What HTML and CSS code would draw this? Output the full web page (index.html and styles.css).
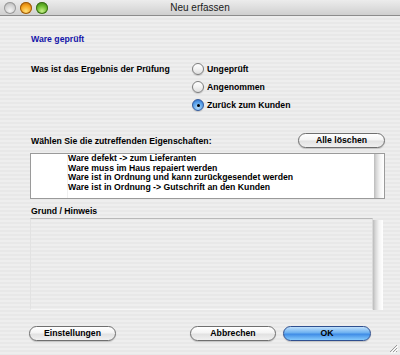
FILE: index.html
```html
<!DOCTYPE html>
<html>
<head>
<meta charset="utf-8">
<link rel="stylesheet" href="styles.css">
</head>
<body>
<div class="window">
  <div class="titlebar">
    <div class="lights">
      <span class="light gray"></span>
      <span class="light orange"></span>
      <span class="light green"></span>
    </div>
    <div class="title">Neu erfassen</div>
  </div>
  <div class="content">
    <div class="section-title">Ware geprüft</div>
    <div class="question">
      <div class="q-label">Was ist das Ergebnis der Prüfung</div>
      <div class="radios">
        <div class="radio-row"><span class="radio"></span>Ungeprüft</div>
        <div class="radio-row"><span class="radio"></span>Angenommen</div>
        <div class="radio-row"><span class="radio checked"></span>Zurück zum Kunden</div>
      </div>
    </div>
    <div class="props-header">
      <div class="label">Wählen Sie die zutreffenden Eigenschaften:</div>
      <button class="btn btn-clear">Alle löschen</button>
    </div>
    <div class="list">
      <div class="list-body">
        <div class="col-check"></div>
        <div class="col-text">
          <div class="item">Ware defekt -&gt; zum Lieferanten</div>
          <div class="item">Ware muss im Haus repaiert werden</div>
          <div class="item">Ware ist in Ordnung und kann zurückgesendet werden</div>
          <div class="item">Ware ist in Ordnung -&gt; Gutschrift an den Kunden</div>
        </div>
      </div>
      <div class="scroll"></div>
    </div>
    <div class="label grund">Grund / Hinweis</div>
    <div class="notes-row">
      <div class="notes"></div>
      <div class="scroll notes-scroll"></div>
    </div>
    <div class="footer">
      <button class="btn btn-settings">Einstellungen</button>
      <div class="spacer"></div>
      <button class="btn btn-cancel">Abbrechen</button>
      <button class="btn btn-ok">OK</button>
    </div>
  </div>
  <div class="grip">
    <svg width="10" height="10" viewBox="0 0 10 10">
      <path d="M9 2 L2 9 M9 5 L5 9 M9 8 L8 9" stroke="#9a9a9a" stroke-width="1" fill="none"/>
      <path d="M10 3 L3 10 M10 6 L6 10" stroke="#ffffff" stroke-width="1" fill="none"/>
    </svg>
  </div>
</div>
</body>
</html>
```
FILE: styles.css
```css
* { box-sizing: border-box; }
html, body { margin: 0; padding: 0; }
body { width: 400px; height: 355px; overflow: hidden; font-family: "Liberation Sans", Arial, sans-serif; }

.window {
  position: relative;
  width: 400px;
  height: 355px;
  background: repeating-linear-gradient(180deg, #eeeeee 0px, #eeeeee 2px, #e8e8e8 2px, #e8e8e8 4px);
  overflow: hidden;
}

.titlebar {
  position: relative;
  height: 16px;
  background: linear-gradient(180deg, #ececec 0%, #dedede 50%, #cfcfcf 100%);
  border-bottom: 1px solid #8c8c8c;
  display: flex;
  align-items: center;
  justify-content: center;
}
.lights {
  position: absolute;
  left: 4px;
  top: 2px;
  display: flex;
  gap: 4px;
}
.light {
  width: 12px;
  height: 12px;
  border-radius: 50%;
  display: block;
}
.light.gray {
  background: radial-gradient(circle at 50% 70%, #f4f4f4 0%, #cfcfcf 55%, #9d9d9d 100%);
  box-shadow: inset 0 0 0 1px #9a9a9a;
}
.light.orange {
  background: radial-gradient(circle at 50% 75%, #ffe07a 0%, #f5a21c 50%, #b15a00 100%);
  box-shadow: inset 0 0 0 1px #9b5b10;
}
.light.green {
  background: radial-gradient(circle at 50% 75%, #c8f08a 0%, #68b92a 50%, #2d6e0c 100%);
  box-shadow: inset 0 0 0 1px #3d6e1a;
}
.title {
  font-size: 10px;
  color: #1a1a1a;
  line-height: 15px;
}

.content {
  padding: 0 15px 0 30px;
  font-size: 8.7px;
  font-weight: bold;
  color: #000;
}

.section-title {
  margin-top: 18px;
  line-height: 11px;
  height: 11px;
  color: #1414a8;
  padding-left: 1px;
}

.question {
  margin-top: 15px;
  display: flex;
}
.q-label {
  width: 162px;
  line-height: 18px;
  padding-left: 1px;
}
.radios {
  display: flex;
  flex-direction: column;
}
.radio-row {
  height: 18px;
  line-height: 18px;
  display: flex;
  align-items: center;
}
.radio {
  width: 12px;
  height: 12px;
  border-radius: 50%;
  border: 1px solid #7d7d7d;
  background: linear-gradient(180deg, #ffffff 0%, #f2f2f2 50%, #dedede 100%);
  margin-right: 3px;
  display: flex;
  align-items: center;
  justify-content: center;
  box-shadow: 0 1px 1px rgba(0,0,0,0.15);
}
.radio.checked {
  border-color: #335a9c;
  background: radial-gradient(circle at 50% 75%, #b7dcfb 0%, #5aa2ea 55%, #2866c4 100%);
}
.radio.checked::after {
  content: "";
  width: 3px;
  height: 3px;
  border-radius: 50%;
  background: #000;
}

.props-header {
  margin-top: 19px;
  display: flex;
  justify-content: space-between;
  align-items: center;
  height: 15px;
}
.label { padding-left: 1px; }

.btn {
  font-family: "Liberation Sans", Arial, sans-serif;
  font-size: 8.7px;
  font-weight: bold;
  color: #000;
  height: 15px;
  padding: 0;
  border: 1px solid #6f6f6f;
  border-radius: 8px;
  background: linear-gradient(180deg, #ffffff 0%, #f4f4f4 45%, #e2e2e2 55%, #f0f0f0 100%);
  box-shadow: 0 1px 1px rgba(0,0,0,0.18);
  line-height: 13px;
}
.btn-clear { width: 87px; }

.list {
  margin-top: 5px;
  height: 46px;
  border: 1px solid #9a9a9a;
  background: #fff;
  display: flex;
}
.list-body {
  flex: 1;
  display: flex;
}
.col-check {
  width: 37px;
  border-right: 1px solid #f0f0f0;
}
.item {
  line-height: 9.5px;
  height: 9.5px;
  white-space: nowrap;
}
.scroll {
  width: 10px;
  background: linear-gradient(90deg, #bcbcbc 0%, #d8d8d8 25%, #f4f4f4 60%, #ffffff 100%);
}

.grund {
  margin-top: 7px;
  line-height: 11px;
  height: 11px;
}

.notes-row {
  margin-top: 1px;
  display: flex;
  height: 92px;
  width: 353px;
}
.notes {
  flex: 1;
  border-top: 1px solid #b9b9b9;
  border-left: 1px solid #e2e2e2;
  border-bottom: 1px solid #f6f6f6;
  border-right: 1px solid #dadada;
}
.notes-scroll {
  margin-top: 2px;
}

.footer {
  margin-top: 16px;
  margin-left: -1px;
  margin-right: 14px;
  display: flex;
  gap: 7px;
}
.spacer { flex: 1; }
.btn-settings { width: 87px; }
.btn-cancel { width: 86px; }
.btn-ok {
  width: 88px;
  border-color: #2f4f8f;
  background: linear-gradient(180deg, #bfe0fc 0%, #6cb0f0 45%, #3f8ce6 55%, #86cbfd 100%);
}

.grip {
  position: absolute;
  right: 2px;
  bottom: 2px;
  width: 10px;
  height: 10px;
}
.grip svg { display: block; }
```
